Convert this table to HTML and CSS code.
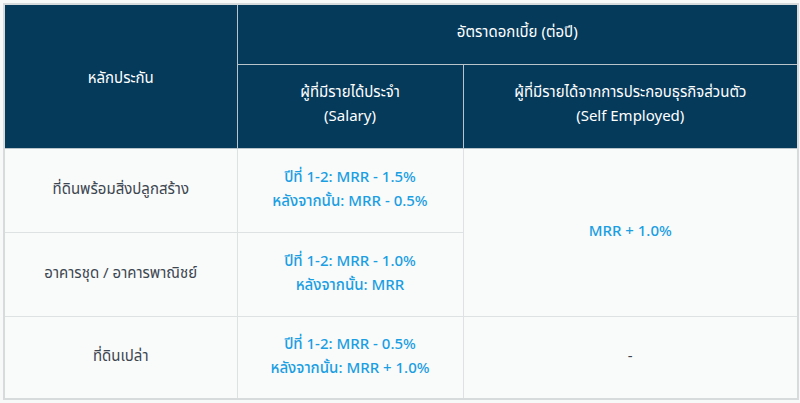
FILE: index.html
```html
<!DOCTYPE html>
<html lang="th">
<head>
<meta charset="utf-8">
<link rel="stylesheet" href="styles.css">
</head>
<body>
<table class="rates">
  <colgroup>
    <col class="c1"><col class="c2"><col class="c3">
  </colgroup>
  <thead>
    <tr class="h1">
      <th rowspan="2">หลักประกัน</th>
      <th colspan="2" class="top">อัตราดอกเบี้ย (ต่อปี)</th>
    </tr>
    <tr class="h2">
      <th>ผู้ที่มีรายได้ประจำ<br>(Salary)</th>
      <th>ผู้ที่มีรายได้จากการประกอบธุรกิจส่วนตัว<br>(Self Employed)</th>
    </tr>
  </thead>
  <tbody>
    <tr>
      <td class="label">ที่ดินพร้อมสิ่งปลูกสร้าง</td>
      <td class="rate">ปีที่ 1-2: MRR - 1.5%<br>หลังจากนั้น: MRR - 0.5%</td>
      <td class="rate" rowspan="2">MRR + 1.0%</td>
    </tr>
    <tr>
      <td class="label">อาคารชุด / อาคารพาณิชย์</td>
      <td class="rate">ปีที่ 1-2: MRR - 1.0%<br>หลังจากนั้น: MRR</td>
    </tr>
    <tr>
      <td class="label">ที่ดินเปล่า</td>
      <td class="rate">ปีที่ 1-2: MRR - 0.5%<br>หลังจากนั้น: MRR + 1.0%</td>
      <td class="label">-</td>
    </tr>
  </tbody>
</table>
</body>
</html>
```
FILE: styles.css
```css
html, body {
  margin: 0;
  padding: 0;
  background: #f7f8f8;
}
body {
  padding: 3px 0 0 3px;
  font-family: "Noto Sans", "Noto Sans Thai", sans-serif;
  font-size: 15px;
}
.rates {
  border-collapse: collapse;
  width: 794px;
  table-layout: fixed;
  border: 2px solid #d8dbdc;
}
.c1 { width: 233px; }
.c2 { width: 226px; }
.c3 { width: 335px; }
.rates th {
  background: #053a5b;
  color: #ffffff;
  font-weight: normal;
  border: 1px solid #b9c3ca;
  text-align: center;
  line-height: 24px;
  padding: 0;
}
.h1 th.top { height: 51px; padding-bottom: 8px; }
.h2 th { height: 75px; padding-bottom: 8px; }
.rates td {
  background: #f9fafa;
  border: 1px solid #dfe2e3;
  text-align: center;
  height: 77px;
  padding: 0 0 6px;
  line-height: 24px;
}
.rates tbody tr:last-child td { height: 75px; }
.label { color: #3c4650; }
.rate { color: #1a9fe3; font-weight: 500; }
```
